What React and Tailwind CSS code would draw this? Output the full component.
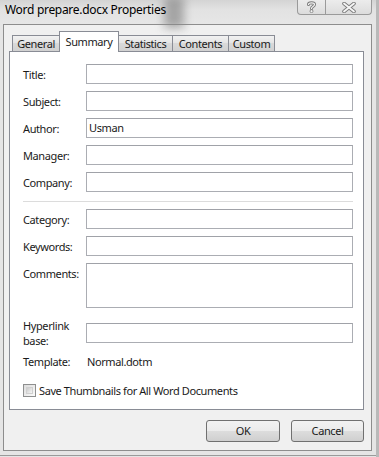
export default function App() {
  const Field = ({ label, value, tall }) => (
    <div className={`flex ${tall ? "items-start" : "items-center"}`}>
      <div className={`w-[63px] shrink-0 leading-[15px] ${tall ? "pt-[3px]" : ""}`}>{label}</div>
      <div
        className={`flex-1 ${tall ? "h-[45px]" : "h-[20px]"} border border-[#abadb3] border-t-[#a0a2a8] bg-white pl-[2px] leading-[18px]`}
      >
        {value}
      </div>
    </div>
  );

  const Tab = ({ label, w, selected, first }) =>
    selected ? (
      <div
        className={`relative z-10 -mb-px -ml-px h-[21px] ${w} border border-b-0 border-[#898c95] bg-white flex justify-center pt-[2px] leading-[15px]`}
      >
        {label}
      </div>
    ) : (
      <div
        className={`${first ? "" : "-ml-px"} h-[16px] ${w} border border-b-0 border-[#898c95] bg-[linear-gradient(#f2f2f2,#e3e3e3_50%,#d9d9d9_50%,#d1d1d1)] flex justify-center items-center leading-[15px]`}
      >
        {label}
      </div>
    );

  return (
    <div className="w-[379px] h-[457px] relative overflow-hidden flex flex-col bg-[#e5e5e5] border-r-[3px] border-r-[#b9b9b9] font-['Noto_Sans',sans-serif] text-[11px] tracking-[-0.4px] text-[#1a1a1a]">
      {/* Title bar */}
      <div className="relative h-[24px] shrink-0 flex items-start bg-[linear-gradient(#d4d4d4,#e2e2e2_40%,#e6e6e6)]">
        <div className="absolute left-[164px] top-[-4px] w-[20px] h-[32px] bg-[#8a8a8a] blur-[5px] opacity-70" />
        <div className="relative pl-[5px] pt-[2px] text-[12px] tracking-[-0.3px] leading-[16px] text-black">
          Word prepare.docx Properties
        </div>
        <div className="relative ml-auto mr-[4px] flex">
          <div className="w-[29px] h-[15px] border border-t-0 border-[#9a9a9a] rounded-bl-[4px] bg-[linear-gradient(#ececec,#dcdcdc)] flex items-center justify-center">
            <svg width="9" height="12" viewBox="0 0 9 12">
              <path
                d="M1.5 3.5 C1.5 1.2 7.5 1.2 7.5 3.5 C7.5 5.5 4.5 5.5 4.5 7.5"
                fill="none"
                stroke="#7a7a7a"
                strokeWidth="3"
                strokeLinecap="round"
              />
              <path
                d="M1.5 3.5 C1.5 1.2 7.5 1.2 7.5 3.5 C7.5 5.5 4.5 5.5 4.5 7.5"
                fill="none"
                stroke="#f4f4f4"
                strokeWidth="1.2"
                strokeLinecap="round"
              />
              <circle cx="4.5" cy="10.2" r="1.5" fill="#f4f4f4" stroke="#7a7a7a" strokeWidth="0.8" />
            </svg>
          </div>
          <div className="-ml-px w-[47px] h-[15px] border border-t-0 border-[#9a9a9a] rounded-br-[4px] bg-[linear-gradient(#ececec,#dcdcdc)] flex items-center justify-center">
            <svg width="14" height="11" viewBox="0 0 14 11">
              <path d="M2 1.5 L12 9.5 M12 1.5 L2 9.5" stroke="#7a7a7a" strokeWidth="3.6" strokeLinecap="round" />
              <path d="M2 1.5 L12 9.5 M12 1.5 L2 9.5" stroke="#f6f6f6" strokeWidth="1.8" strokeLinecap="round" />
            </svg>
          </div>
        </div>
      </div>

      {/* Client area */}
      <div className="ml-[3px] mr-[4px] mb-[5px] h-[427px] border border-[#8d8d8d] bg-[#f0f0f0] flex flex-col">
        <div className="mt-[6px] ml-[5px] mr-[7px]">
          <div className="h-[20px] pl-[3px] flex items-end">
            <Tab label="General" w="w-[48px]" first />
            <Tab label="Summary" w="w-[60px]" selected />
            <Tab label="Statistics" w="w-[55px]" />
            <Tab label="Contents" w="w-[57px]" />
            <Tab label="Custom" w="w-[47px]" />
          </div>
          <div className="h-[359px] border border-[#898c95] bg-white pt-[12px] pl-[13px] pr-[10px]">
            <div className="flex flex-col gap-[7px]">
              <Field label="Title:" />
              <Field label="Subject:" />
              <Field label="Author:" value="Usman" />
              <Field label="Manager:" />
              <Field label="Company:" />
            </div>
            <div className="mt-[9px] h-px bg-[#dcdcdc]" />
            <div className="mt-[7px] flex flex-col gap-[7px]">
              <Field label="Category:" />
              <Field label="Keywords:" />
              <Field label="Comments:" tall />
            </div>
            <div className="mt-[10px]">
              <Field
                label={
                  <>
                    Hyperlink
                    <br />
                    base:
                  </>
                }
              />
            </div>
            <div className="mt-[6px] flex leading-[15px]">
              <div className="w-[64px] shrink-0">Template:</div>
              <div>Normal.dotm</div>
            </div>
            <div className="mt-[14px] flex items-center">
              <div className="w-[13px] h-[13px] border border-[#8e8f8f] bg-[linear-gradient(135deg,#dcdcdc,#fbfbfb)] p-[2px]">
                <div className="w-full h-full border border-[#d0d0d0] bg-[linear-gradient(135deg,#cbcbcb,#f6f6f6)]" />
              </div>
              <div className="ml-[3px] leading-[15px]">Save Thumbnails for All Word Documents</div>
            </div>
          </div>
        </div>
        <div className="mt-[10px] mr-[7px] flex justify-end gap-[11px]">
          <button className="w-[74px] h-[22px] rounded-[3px] border border-[#707070] bg-[linear-gradient(#f2f2f2,#ebebeb_50%,#dddddd_50%,#cfcfcf)] leading-[18px] text-[#1a1a1a]">
            OK
          </button>
          <button className="w-[73px] h-[22px] rounded-[3px] border border-[#707070] bg-[linear-gradient(#f2f2f2,#ebebeb_50%,#dddddd_50%,#cfcfcf)] leading-[18px] text-[#1a1a1a]">
            Cancel
          </button>
        </div>
      </div>
      <div className="absolute left-0 right-0 bottom-[1px] h-px bg-[#9a9a9a]" />
    </div>
  );
}
